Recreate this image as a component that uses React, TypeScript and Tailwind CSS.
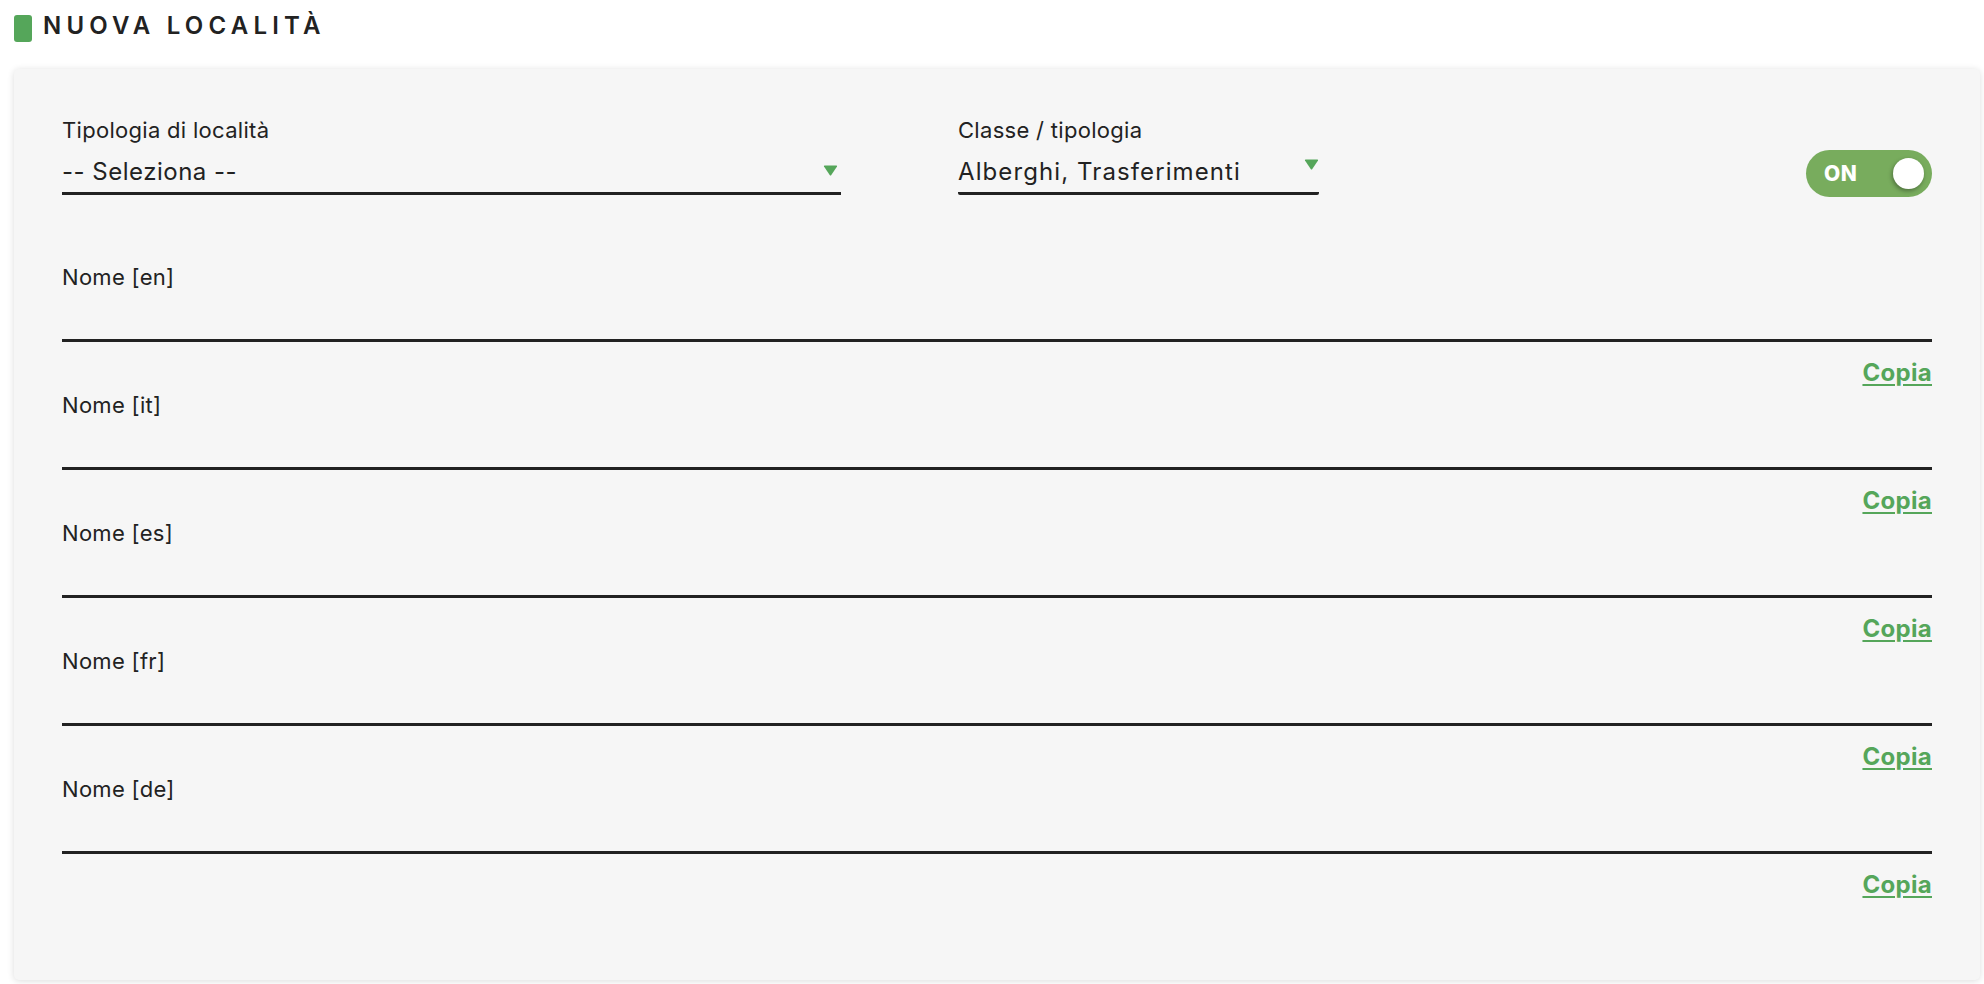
import React from "react";

const GREEN = "#55a65a";

function Arrow({ className }: { className?: string }) {
  return (
    <svg className={className} width="15" height="11" viewBox="0 0 15 11">
      <path d="M1 1.5 Q0.5 0.5 1.8 0.5 H13.2 Q14.5 0.5 14 1.5 L8.3 10 Q7.5 11 6.7 10 Z" fill="#55a65a" />
    </svg>
  );
}

function NomeField({ lang }: { lang: string }) {
  return (
    <div className="flex flex-col">
      <div className="text-[22px] leading-[28px] tracking-[0.3px] text-[#222]">Nome [{lang}]</div>
      <div className="h-[48px] border-b-[3px] border-[#222] box-content" />
      <div className="mt-[17px] flex justify-end">
        <a className="text-[24px] leading-[28px] font-bold tracking-[0.3px] text-[#55a65a] underline decoration-2 underline-offset-[3px] cursor-pointer">
          Copia
        </a>
      </div>
    </div>
  );
}

export default function App() {
  return (
    <div className="min-h-screen w-full bg-white text-[#222]" style={{ fontFamily: "Inter, 'Noto Sans', sans-serif" }}>
      <div className="flex items-start pl-[14px] pt-[12px] h-[69px]">
        <div className="mt-[3px] h-[27px] w-[18px] rounded-[3px]" style={{ backgroundColor: GREEN }} />
        <div className="ml-[11px] text-[24px] leading-[28px] font-semibold tracking-[5.2px] text-[#222]">
          NUOVA LOCALITÀ
        </div>
      </div>
      <div className="ml-[14px] mr-[4px] h-[911px] rounded-[5px] bg-[#f6f6f6] shadow-[0_1px_7px_rgba(0,0,0,0.14)] px-[48px] pt-[47px]">
        <div className="flex items-start">
          <div className="w-[779px] flex flex-col">
            <div className="text-[22px] leading-[28px] tracking-[0.3px]">Tipologia di località</div>
            <div className="mt-[12px] flex items-start justify-between pr-[3px] pb-[4px] border-b-[3px] border-[#222]">
              <span className="text-[24px] leading-[32px] tracking-[0.5px]">-- Seleziona --</span>
              <Arrow className="mt-[9px]" />
            </div>
          </div>
          <div className="ml-[117px] w-[361px] flex flex-col">
            <div className="text-[22px] leading-[28px] tracking-[0.3px]">Classe / tipologia</div>
            <div className="mt-[12px] flex items-start justify-between pb-[4px] border-b-[3px] border-[#222] rounded-b-[2px]">
              <span className="text-[24px] leading-[32px] tracking-[1.1px]">Alberghi, Trasferimenti</span>
              <Arrow className="mt-[3px]" />
            </div>
          </div>
          <div className="ml-auto mt-[34px] relative h-[47px] w-[126px] rounded-full bg-[#78ac5d] flex items-center">
            <span className="ml-[18px] text-[21px] font-extrabold leading-none text-white tracking-[0.5px]">ON</span>
            <span className="absolute right-[8px] top-[8px] h-[31px] w-[31px] rounded-full bg-white shadow-[-1px_2px_4px_rgba(0,0,0,0.35)]" />
          </div>
        </div>
        <div className="mt-[66px] flex flex-col gap-[4px]">
          {["en", "it", "es", "fr", "de"].map((l) => (
            <NomeField key={l} lang={l} />
          ))}
        </div>
      </div>
    </div>
  );
}
